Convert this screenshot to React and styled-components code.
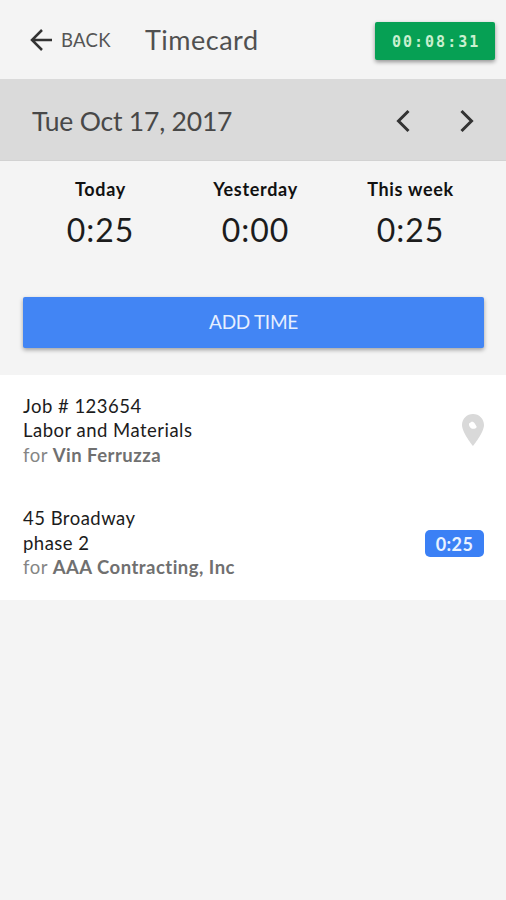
import React from 'react';
import styled, { createGlobalStyle } from 'styled-components'

const GlobalStyle = createGlobalStyle`
    * {
        box-sizing: border-box;
    }

    body {
        margin: 0;
        background: #f4f4f4;
        font-family: Lato, 'Open Sans', sans-serif;
        color: #1c1c1c;
    }

    button {
        font-family: inherit;
        border: 0;
        padding: 0;
        background: none;
    }
`

const PageStyled = styled.div`
    min-height: 900px;
    overflow: hidden;
    background: #f4f4f4;
`

const HeaderStyled = styled.header`
    display: flex;
    align-items: center;
    height: 79px;
    padding: 2px 11px 0 30px;
`

const BackButton = styled.button`
    display: flex;
    align-items: center;
    gap: 8px;
    width: 115px;
    padding-bottom: 1px;
    color: #555;
    font-size: 18.5px;
    letter-spacing: 0.3px;
`

const TitleStyled = styled.h1`
    flex: 1;
    margin: 0;
    padding-bottom: 1px;
    font-size: 27px;
    font-weight: 400;
    line-height: 32px;
    letter-spacing: 0.5px;
    color: #505050;
`

const TimerStyled = styled.div`
    width: 120px;
    height: 38px;
    padding-left: 17px;
    border-radius: 2px;
    background: #06a054;
    box-shadow: 0 2px 4px rgba(0, 0, 0, 0.4);
    color: #c9f0d0;
    font: 700 15px/40px 'DejaVu Sans Mono', monospace;
    letter-spacing: 2px;
`

const DateBar = styled.div`
    display: flex;
    align-items: center;
    height: 82px;
    padding: 2px 32px 0;
    border-top: 1px solid #dadada;
    border-bottom: 1px solid #d2d2d2;
    background: #dadada;
`

const DateText = styled.div`
    flex: 1;
    padding-bottom: 1px;
    color: #484848;
    font-size: 26.5px;
    line-height: 32px;
    letter-spacing: -0.2px;
`

const ArrowButton = styled.button`
    display: flex;
    margin-left: 50px;
`

const TotalsStyled = styled.div`
    display: grid;
    grid-template-columns: repeat(3, 155px);
    justify-content: center;
    height: 136px;
    padding: 16px 0 0 5px;
    text-align: center;
`

const TotalLabel = styled.div`
    font-size: 18px;
    font-weight: 700;
    line-height: 24px;
    letter-spacing: 0.7px;
    color: #111;
`

const TotalValue = styled.div`
    margin-top: 9px;
    font-size: 32px;
    line-height: 40px;
    letter-spacing: 0.9px;
`

const AddButton = styled.button`
    display: block;
    width: 461px;
    height: 51px;
    margin: 0 0 27px 23px;
    padding-bottom: 2px;
    border-radius: 2px;
    background: #4285f4;
    box-shadow: 0 2px 4px rgba(0, 0, 0, 0.35);
    color: #e6efff;
    font-size: 19px;
    letter-spacing: -0.3px;
`

const ListStyled = styled.div`
    background: #fff;
`

const JobRow = styled.div`
    display: flex;
    align-items: center;
    justify-content: space-between;
    height: 112.5px;
    padding: 0 22px 0 23px;
`

const JobInfo = styled.div`
    padding-bottom: 2px;
`

const JobLine = styled.div`
    font-size: 18.5px;
    line-height: 24.5px;
    letter-spacing: 0.48px;
    white-space: nowrap;
    color: ${props => props.$muted ? '#858585' : '#1c1c1c'};

    strong {
        font-weight: 700;
        color: #707070;
    }
`

const TimeBadge = styled.div`
    width: 59px;
    height: 27px;
    border-radius: 5px;
    background: #3b80f5;
    color: #eaf2ff;
    font-size: 18px;
    font-weight: 700;
    line-height: 28px;
    letter-spacing: 0.4px;
    text-align: center;
`

const PinStyled = styled.svg`
    margin-bottom: 2px;
`

const PinIcon = () => (
    <PinStyled width="22" height="32" viewBox="0 0 22 32">
        <path fill="#d9d9d9" fillRule="evenodd" d="M11 0C4.900 0 0 4.800 0 11c0 7.500 11 21 11 21s11-13.500 11-21C22 4.800 17.100 0 11 0zm-1 7.500a3.700 3.700 0 0 1 2.800 2l2 3.500c-1.200 2-4.200 2.500-6 1-1.500-1.300-2-3-1.800-4.500z" />
    </PinStyled>
)

const Chevron = ({ d }) => (
    <svg width="14" height="24" viewBox="0 0 14 24" fill="none" stroke="#333" strokeWidth="3">
        <path d={d} />
    </svg>
)

const totals = [
    { label: 'Today', value: '0:25' },
    { label: 'Yesterday', value: '0:00' },
    { label: 'This week', value: '0:25' },
]

const jobs = [
    { id: 1, title: 'Job # 123654', phase: 'Labor and Materials', client: 'Vin Ferruzza' },
    { id: 2, title: '45 Broadway', phase: 'phase 2', client: 'AAA Contracting, Inc', time: '0:25' },
]

const App = () => {
    return (
        <PageStyled>
            <GlobalStyle />
            <HeaderStyled>
                <BackButton>
                    <svg width="23" height="24" viewBox="0 0 23 24" fill="none" stroke="#333" strokeWidth="2.500">
                        <path d="M12 2 2 12l10 10M2 12h20" />
                    </svg>
                    BACK
                </BackButton>
                <TitleStyled>Timecard</TitleStyled>
                <TimerStyled>00:08:31</TimerStyled>
            </HeaderStyled>
            <DateBar>
                <DateText>Tue Oct 17, 2017</DateText>
                <ArrowButton><Chevron d="M12.500 2 2.500 12l10 10" /></ArrowButton>
                <ArrowButton><Chevron d="M1.500 2l10 10-10 10" /></ArrowButton>
            </DateBar>
            <TotalsStyled>
                {totals.map(total => (
                    <div key={total.label}>
                        <TotalLabel>{total.label}</TotalLabel>
                        <TotalValue>{total.value}</TotalValue>
                    </div>
                ))}
            </TotalsStyled>
            <AddButton>ADD TIME</AddButton>
            <ListStyled>
                {jobs.map(job => (
                    <JobRow key={job.id}>
                        <JobInfo>
                            <JobLine>{job.title}</JobLine>
                            <JobLine>{job.phase}</JobLine>
                            <JobLine $muted>for <strong>{job.client}</strong></JobLine>
                        </JobInfo>
                        {job.time ? <TimeBadge>{job.time}</TimeBadge> : <PinIcon />}
                    </JobRow>
                ))}
            </ListStyled>
        </PageStyled>
    )
}

export default App
